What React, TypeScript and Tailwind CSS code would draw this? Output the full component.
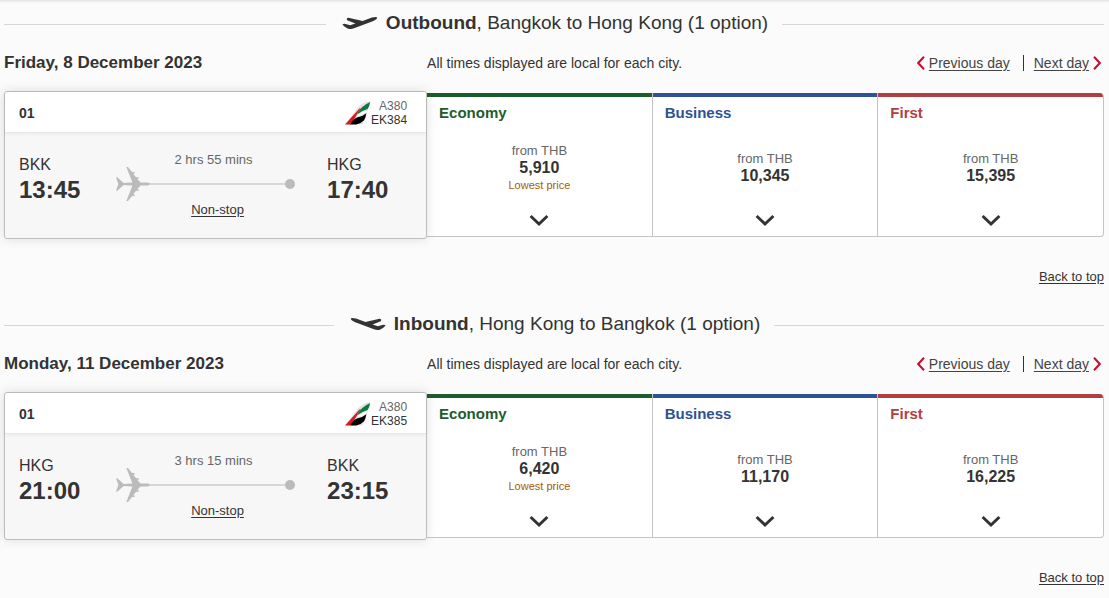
interface Cabin {
  name: 'Economy' | 'Business' | 'First';
  price: string;
  lowest?: boolean;
}

interface FlightSectionProps {
  direction: 'Outbound' | 'Inbound';
  route: string;
  date: string;
  flight: string;
  from: string;
  to: string;
  departs: string;
  arrives: string;
  duration: string;
  cabins: Cabin[];
}

const cabinStyles = {
  Economy: { bar: 'border-[#1f5c2b]', title: 'text-[#1f5c2b]' },
  Business: { bar: 'border-[#2e5293]', title: 'text-[#2e5293]' },
  First: { bar: 'border-[#b23f3f]', title: 'text-[#b23f3f]' },
};

const sections: FlightSectionProps[] = [
  {
    direction: 'Outbound',
    route: 'Bangkok to Hong Kong',
    date: 'Friday, 8 December 2023',
    flight: 'EK384',
    from: 'BKK',
    to: 'HKG',
    departs: '13:45',
    arrives: '17:40',
    duration: '2 hrs 55 mins',
    cabins: [
      { name: 'Economy', price: '5,910', lowest: true },
      { name: 'Business', price: '10,345' },
      { name: 'First', price: '15,395' },
    ],
  },
  {
    direction: 'Inbound',
    route: 'Hong Kong to Bangkok',
    date: 'Monday, 11 December 2023',
    flight: 'EK385',
    from: 'HKG',
    to: 'BKK',
    departs: '21:00',
    arrives: '23:15',
    duration: '3 hrs 15 mins',
    cabins: [
      { name: 'Economy', price: '6,420', lowest: true },
      { name: 'Business', price: '11,170' },
      { name: 'First', price: '16,225' },
    ],
  },
];

function HeadingPlane({ landing }: { landing: boolean }) {
  return (
    <svg
      viewBox="0 0 36 14"
      className={landing ? 'w-9 h-3.5 -scale-x-100' : 'w-9 h-3.5'}
      fill="#333"
      aria-hidden="true"
    >
      <path d="M.4 8.6 Q1.6 7.2 3.6 8 L8.2 9.2 L13.4 7.4 L5.2 4.2 Q4.2 2.6 5.4 2 Q6.8 1.6 8.6 2.2 L20.6 5 L30 1.6 Q34.8 .2 35.2 1.7 Q35.2 3.2 31.4 4.9 L12 12.2 Q8.6 13.6 5.6 12.4 Q1.8 10.6 .4 8.6Z" />
    </svg>
  );
}

function RoutePlane() {
  return (
    <svg viewBox="0 0 34 34" className="w-[34px] h-[34px] shrink-0" fill="#bbb" aria-hidden="true">
      <path d="M10.4 0 L12 0 L16 5 L18.6 5 V6.4 L17.2 6.8 L20 10.2 L22.8 10.2 V11.6 L21.2 12 L24.6 15.6 L32 15.6 Q34 16 34 17 Q34 18 32 18.4 L24.6 18.4 L21.2 22 L22.8 22.4 V23.8 L20 23.8 L17.2 27.2 L18.6 27.6 V29 L16 29 L12 34 L10.4 34 L16.4 18.6 L7.6 18 L1.6 23.6 L0 23.6 L2.4 17 L0 10.4 L1.6 10.4 L7.6 16 L16.4 15.4Z" />
    </svg>
  );
}

function TailLogo() {
  return (
    <svg viewBox="0 0 26 24" className="w-[26px] h-6" aria-hidden="true">
      <path d="M25.4 0 Q17 1 13 6.5 L0 23.4 H17.5 Q20.5 19 22 12 Z" fill="#e4e4e4" />
      <path d="M25.2 1 Q24.6 5 22.6 8 Q17.5 9.4 11.8 13.6 Q15.2 5.4 25.2 1Z" fill="#0b7a3e" />
      <path d="M0 23.4 L12.6 9.4 Q14 7.6 16 6.8 Q12.8 10.6 11.4 14.6 L6 23.4Z" fill="#d71a21" />
      <path d="M5.4 23.4 Q8 18.4 12 16.6 Q17.6 15.4 21.4 12.2 Q20.6 17 18.8 19.6 Q15.6 23 11.4 23.4Z" fill="#000" />
      <path d="M10.6 16.2 Q16 11 22.4 9.2 L21.6 11.6 Q16.4 15 10.6 16.2Z" fill="#fff" />
    </svg>
  );
}

function DayChevron({ next = false }: { next?: boolean }) {
  return (
    <svg
      viewBox="0 0 8 14"
      className={next ? 'w-2 h-3.5 ml-1' : 'w-2 h-3.5 mr-1 -scale-x-100'}
      fill="none"
      stroke="#c60c30"
      strokeWidth="2"
      aria-hidden="true"
    >
      <path d="M1 .8 L6.8 7 L1 13.2" />
    </svg>
  );
}

function CabinOption({ name, price, lowest }: Cabin) {
  const style = cabinStyles[name];
  return (
    <div className="flex border-r border-b border-[#c4c4c4] bg-white last:rounded-r last:overflow-hidden">
      <button type="button" className={`flex-1 flex flex-col border-t-4 pt-1.5 pb-[7px] ${style.bar}`}>
        <span className={`self-start px-3 text-[15px] leading-5 font-bold ${style.title}`}>{name}</span>
        <span className="flex-1 w-full flex flex-col justify-center pt-0.5 text-center">
          <span className="text-[13px] leading-4 text-[#666]">from THB</span>
          <span className="text-base leading-[18px] font-bold">{price}</span>
          {lowest && <span className="text-[11px] leading-4 text-[#a85b00]">Lowest price</span>}
        </span>
        <svg
          viewBox="0 0 20 18"
          className="w-5 h-[18px] self-center"
          fill="none"
          stroke="#333"
          strokeWidth="3"
          aria-hidden="true"
        >
          <path d="M1.6 5 L10 13 L18.4 5" />
        </svg>
      </button>
    </div>
  );
}

function FlightCard({ flight, from, to, departs, arrives, duration }: FlightSectionProps) {
  return (
    <article className="relative border border-[#bdbdbd] rounded-[3px] bg-[#f7f7f7] shadow-[0_0_12px_rgba(0,0,0,0.12)]">
      <div className="flex items-center justify-between h-[41px] pt-0.5 pl-3.5 pr-[19px] bg-white rounded-t-[3px] border-b border-[#e6e6e6] shadow-[0_1px_4px_rgba(0,0,0,0.06)]">
        <span className="text-sm font-bold">01</span>
        <div className="flex items-center">
          <TailLogo />
          <p className="text-[12px] leading-3.5 text-right">
            <span className="block text-[#666]">A380</span>
            {flight}
          </p>
        </div>
      </div>

      <div className="flex pl-3.5 pt-5 pb-[19px]">
        <div className="w-[97px]">
          <p className="text-base leading-6">{from}</p>
          <p className="text-2xl leading-[26px] font-bold">{departs}</p>
        </div>
        <div className="flex-1 text-center text-[13px]">
          <p className="pl-4 leading-3.5 text-[#666]">{duration}</p>
          <div className="flex items-center">
            <RoutePlane />
            <span className="flex-1 h-0.5 bg-[#d6d6d6]" />
            <span className="size-2.5 rounded-full bg-[#bbb]" />
          </div>
          <p className="pl-6 leading-[18px]">
            <a href="#stops" className="underline underline-offset-2">Non-stop</a>
          </p>
        </div>
        <div className="ml-8 w-[99px]">
          <p className="text-base leading-6">{to}</p>
          <p className="text-2xl leading-[26px] font-bold">{arrives}</p>
        </div>
      </div>
    </article>
  );
}

function FlightSection(props: FlightSectionProps) {
  const { direction, route, date, cabins } = props;
  return (
    <section className="pb-3.5">
      {/* Heading between two rules */}
      <div className="flex items-center h-[46px]">
        <span className="flex-1 h-px mt-0.5 bg-[#d6d6d6]" />
        <h2 className="flex items-center pl-4 pr-3.5 text-[19px]">
          <HeadingPlane landing={direction === 'Inbound'} />
          <span className="ml-2">
            <strong>{direction}</strong>, {route} (1 option)
          </span>
        </h2>
        <span className="flex-1 h-px mt-0.5 bg-[#d6d6d6]" />
      </div>

      {/* Date and day navigation */}
      <div className="grid grid-cols-[5fr_8fr] items-center h-[34px] mb-[11px]">
        <h3 className="text-[17px] font-bold">{date}</h3>
        <div className="flex items-center justify-between pr-[3px] text-sm">
          <p>All times displayed are local for each city.</p>
          <nav className="flex items-center text-[#444]">
            <DayChevron />
            <a href="#previous" className="underline underline-offset-2">Previous day</a>
            <span className="w-px h-4 ml-[13px] mr-2.5 bg-[#333]" />
            <a href="#next" className="underline underline-offset-2">Next day</a>
            <DayChevron next />
          </nav>
        </div>
      </div>

      <div className="grid grid-cols-[5fr_8fr]">
        <FlightCard {...props} />
        <div className="grid grid-cols-3 my-0.5">
          {cabins.map((cabin) => (
            <CabinOption key={cabin.name} {...cabin} />
          ))}
        </div>
      </div>

      <p className="mt-7 text-right text-[13px] leading-5">
        <a href="#top" className="underline underline-offset-2">Back to top</a>
      </p>
    </section>
  );
}

export default function App() {
  return (
    <main
      id="top"
      className="min-h-screen pl-1 pr-[5px] bg-[#fbfbfb] text-[#333] font-['Liberation_Sans',Arial,sans-serif] shadow-[inset_0_3px_3px_-2px_rgba(0,0,0,0.12)]"
    >
      {sections.map((section) => (
        <FlightSection key={section.direction} {...section} />
      ))}
    </main>
  );
}
